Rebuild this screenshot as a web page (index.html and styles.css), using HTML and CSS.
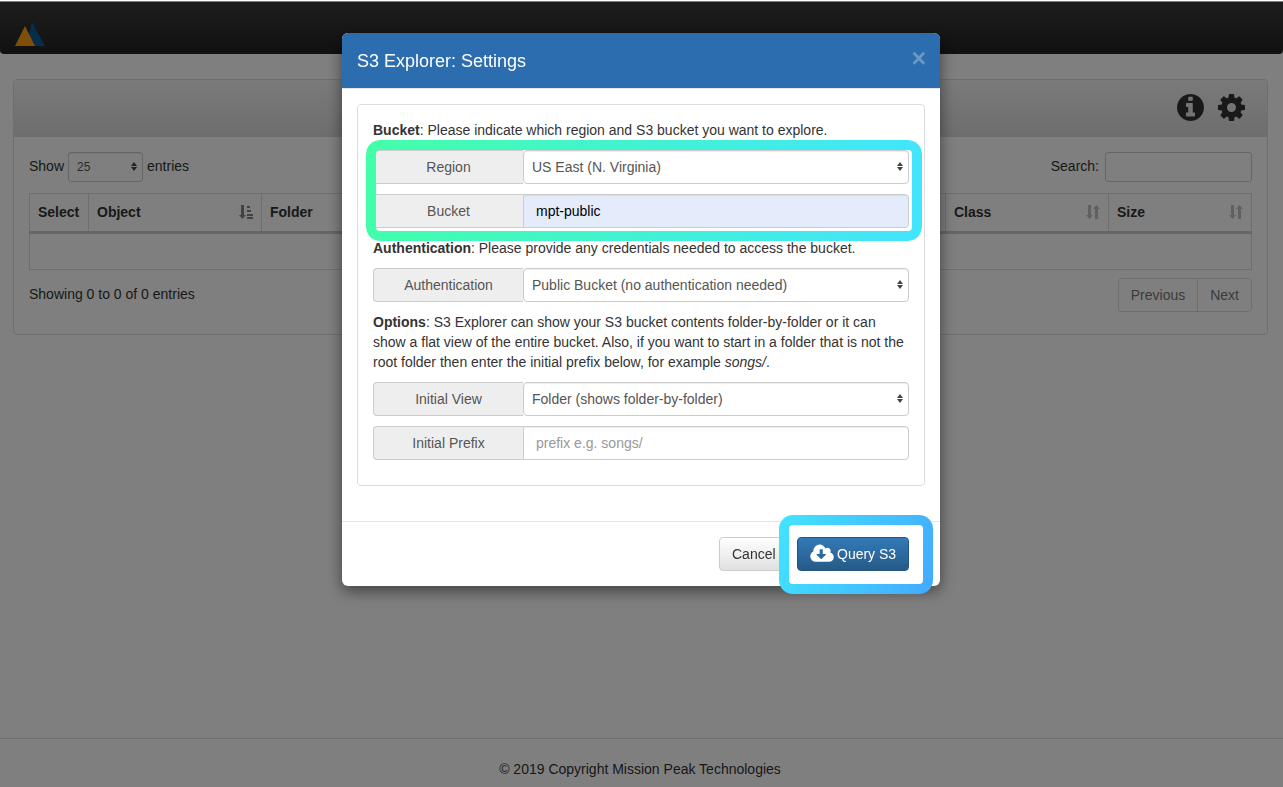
FILE: index.html
```html
<!DOCTYPE html>
<html lang="en">
<head>
  <meta charset="UTF-8" />
  <meta name="viewport" content="width=device-width, initial-scale=1.0"/>
  <title>S3 Explorer</title>
  <link rel="stylesheet" href="styles.css">
</head>
<body>

  <nav class="navbar">
    <svg class="logo" width="32" height="26" viewBox="0 0 32 26">
      <polygon points="19,2 32,26 13,26" fill="#0c5c96"/>
      <polygon points="12,6 22,26 2,26" fill="#ff9f10"/>
    </svg>
  </nav>

  <main class="panel page-panel">
    <div class="panel-heading page-heading">
      <svg class="tool-icon" viewBox="0 128 1536 1536"><path d="M1024 1376v-160q0-14-9-23t-23-9h-96v-512q0-14-9-23t-23-9h-320q-14 0-23 9t-9 23v160q0 14 9 23t23 9h96v320h-96q-14 0-23 9t-9 23v160q0 14 9 23t23 9h448q14 0 23-9t9-23zm-128-896v-160q0-14-9-23t-23-9h-192q-14 0-23 9t-9 23v160q0 14 9 23t23 9h192q14 0 23-9t9-23zm640 416q0 209-103 385.5t-279.5 279.5-385.5 103-385.5-103-279.5-279.5-103-385.5 103-385.5 279.5-279.5 385.5-103 385.5 103 279.5 279.5 103 385.5z"/></svg>
      <svg class="tool-icon" viewBox="128 128 1536 1536"><path d="M1152 896q0-106-75-181t-181-75-181 75-75 181 75 181 181 75 181-75 75-181zm512-109v222q0 12-8 23t-20 13l-185 28q-19 54-39 91 35 50 107 138 10 12 10 25t-9 23q-27 37-99 108t-94 71q-12 0-26-9l-138-108q-44 23-91 38-16 136-29 186-7 28-36 28h-222q-14 0-24.5-8.5t-11.5-21.5l-28-184q-49-16-90-37l-141 107q-10 9-25 9-14 0-25-11-126-114-165-168-7-10-7-23 0-12 8-23 15-21 51-66.5t54-70.5q-27-50-41-99l-183-27q-13-2-21-12.5t-8-23.5v-222q0-12 8-23t19-13l186-28q14-46 39-92-40-57-107-138-10-12-10-24 0-10 9-23 26-36 98.5-107.5t94.5-71.5q13 0 26 10l138 107q44-23 91-38 16-136 29-186 7-28 36-28h222q14 0 24.5 8.5t11.5 21.5l28 184q49 16 90 37l142-107q9-9 24-9 13 0 25 10 129 119 165 170 7 8 7 22 0 12-8 23-15 21-51 66.5t-54 70.5q26 50 41 98l183 28q13 2 21 12.5t8 23.5z"/></svg>
    </div>
    <div class="page-body">
      <div class="table-tools">
        <div class="tool-group">
          <span class="tool-text">Show</span>
          <span class="select-wrap small-select"><select><option>25</option></select></span>
          <span class="tool-text">entries</span>
        </div>
        <div class="tool-group search-group">
          <label class="tool-text" for="search">Search:</label>
          <input class="search-input" id="search" type="text" />
        </div>
      </div>

      <table class="data-table">
        <colgroup>
          <col class="col-select"><col class="col-object"><col><col class="col-class"><col class="col-size">
        </colgroup>
        <thead>
          <tr>
            <th>Select</th>
            <th>
              <span class="th-inner">Object
                <svg class="sort-icon active" width="14" height="14" viewBox="0 0 14 14">
                  <path d="M2 0h3v10h2l-3.500 4L0 10h2z"/>
                  <path d="M8 1h3v2H8zM8 5h4v2H8zM8 9h6v2H8zM8 12h6v2H8z"/>
                </svg>
              </span>
            </th>
            <th>Folder</th>
            <th>
              <span class="th-inner">Class
                <svg class="sort-icon" width="14" height="14" viewBox="0 0 14 14"><path d="M2 0h3v10h2l-3.500 4L0 10h2zM9 14h3V4h2l-3.500-4L7 4h2z"/></svg>
              </span>
            </th>
            <th>
              <span class="th-inner">Size
                <svg class="sort-icon" width="14" height="14" viewBox="0 0 14 14"><path d="M2 0h3v10h2l-3.500 4L0 10h2zM9 14h3V4h2l-3.500-4L7 4h2z"/></svg>
              </span>
            </th>
          </tr>
        </thead>
        <tbody>
          <tr><td colspan="5"></td></tr>
        </tbody>
      </table>

      <div class="table-foot">
        <span class="foot-info">Showing 0 to 0 of 0 entries</span>
        <div class="pagination">
          <a class="page-link">Previous</a>
          <a class="page-link">Next</a>
        </div>
      </div>
    </div>
  </main>

  <footer class="page-footer">© 2019 Copyright Mission Peak Technologies</footer>

  <div class="backdrop"></div>

  <div class="modal">
    <div class="modal-header">
      <h4 class="modal-title">S3 Explorer: Settings</h4>
      <span class="close">×</span>
    </div>
    <div class="modal-body">
      <div class="panel settings">
        <p><b>Bucket</b>: Please indicate which region and S3 bucket you want to explore.</p>
        <div class="input-group">
          <span class="addon">Region</span>
          <span class="select-wrap"><select><option>US East (N. Virginia)</option></select></span>
        </div>
        <div class="input-group">
          <span class="addon">Bucket</span>
          <input class="text-input autofilled" type="text" value="mpt-public" />
        </div>

        <p><b>Authentication</b>: Please provide any credentials needed to access the bucket.</p>
        <div class="input-group">
          <span class="addon">Authentication</span>
          <span class="select-wrap"><select><option>Public Bucket (no authentication needed)</option></select></span>
        </div>

        <p><b>Options</b>: S3 Explorer can show your S3 bucket contents folder-by-folder or it can show a flat view of the entire bucket. Also, if you want to start in a folder that is not the root folder then enter the initial prefix below, for example <i>songs/</i>.</p>
        <div class="input-group">
          <span class="addon">Initial View</span>
          <span class="select-wrap"><select><option>Folder (shows folder-by-folder)</option></select></span>
        </div>
        <div class="input-group">
          <span class="addon">Initial Prefix</span>
          <input class="text-input" type="text" placeholder="prefix e.g. songs/" />
        </div>

        <div class="green-frame"></div>
      </div>
    </div>
    <div class="modal-footer">
      <button class="btn btn-default" type="button">Cancel</button>
      <div class="blue-frame">
        <button class="btn btn-primary" type="button">
          <svg class="cloud" width="24" height="22" viewBox="0 0 1920 1792"><path d="M1280 928q0-14-9-23t-23-9h-224v-352q0-13-9.500-22.500t-22.500-9.500h-192q-13 0-22.500 9.500t-9.500 22.500v352h-224q-13 0-22.500 9.500t-9.500 22.500q0 14 9 23l352 352q9 9 23 9t23-9l351-351q10-12 10-24zm640 224q0 159-112.500 271.500t-271.500 112.500h-1088q-185 0-316.500-131.500t-131.500-316.500q0-130 70-240t188-165q-2-30-2-43 0-212 150-362t362-150q156 0 285.500 87t188.500 231q71-62 166-62 106 0 181 75t75 181q0 76-41 138 130 31 213.500 135.500t83.500 238.500z"/></svg>
          Query S3
        </button>
      </div>
    </div>
  </div>

</body>
</html>
```

FILE: styles.css
```css
* {
  box-sizing: border-box;
}

html, body {
  height: 100%;
}

body {
  margin: 0;
  display: flex;
  flex-direction: column;
  overflow: hidden;
  background: #fff;
  color: #333;
  font-family: "Liberation Sans", Arial, sans-serif;
  font-size: 14px;
  line-height: 20px;
}

/* page behind the dialog */

.navbar {
  height: 52px;
  margin-top: 2px;
  flex: none;
  display: flex;
  align-items: flex-end;
  padding: 0 0 8px 13px;
  background: linear-gradient(#3c3c3c, #222);
  border-radius: 0 0 4px 4px;
}

.panel {
  background: #fff;
  border: 1px solid #ddd;
  border-radius: 4px;
}

.page-panel {
  height: 256px;
  flex: none;
  margin: 25px 15px 0 13px;
}

.page-heading {
  height: 57px;
  display: flex;
  justify-content: flex-end;
  align-items: center;
  gap: 14px;
  padding: 0 22px 2px 0;
  background: linear-gradient(#f5f5f5, #dcdcdc);
  border-bottom: 1px solid #ddd;
  border-radius: 3px 3px 0 0;
}

.tool-icon {
  width: 27px;
  height: 27px;
  fill: #333;
}

.page-body {
  padding: 15px;
}

.table-tools {
  display: flex;
  justify-content: space-between;
  margin-bottom: 11px;
}

.tool-group {
  display: flex;
  align-items: center;
  gap: 4px;
  height: 30px;
}

.tool-text {
  margin-bottom: 2px;
}

.search-group {
  gap: 6px;
}

.search-input {
  width: 147px;
  height: 30px;
  border: 1px solid #ccc;
  border-radius: 3px;
}

.data-table {
  width: 100%;
  table-layout: fixed;
  border-collapse: collapse;
  border: 1px solid #ddd;
}

.col-select { width: 59px; }
.col-object { width: 173px; }
.col-class { width: 163px; }
.col-size { width: 143px; }

.data-table th {
  height: 39px;
  padding: 0 8px 2px;
  text-align: left;
  border: 1px solid #ddd;
  border-bottom: 3px solid #ccc;
}

.data-table td {
  height: 37px;
}

.th-inner {
  display: flex;
  justify-content: space-between;
  align-items: center;
}

.sort-icon {
  fill: #333;
  opacity: 0.3;
}

.sort-icon.active {
  opacity: 0.6;
}

.table-foot {
  display: flex;
  justify-content: space-between;
  align-items: flex-start;
  margin-top: 8px;
}

.foot-info {
  padding-top: 6px;
}

.pagination {
  display: flex;
  height: 34px;
  border: 1px solid #ddd;
  border-radius: 4px;
}

.page-link {
  padding: 6px 12px;
  color: #777;
}

.page-link + .page-link {
  border-left: 1px solid #ddd;
}

.page-footer {
  height: 49px;
  margin-top: auto;
  flex: none;
  padding: 20px 3px 0 0;
  text-align: center;
  border-top: 1px solid #ddd;
}

/* dialog */

.backdrop {
  position: fixed;
  inset: 1px 0 0;
  background: rgba(0, 0, 0, 0.5);
}

.modal {
  position: fixed;
  top: 33px;
  left: 342px;
  width: 598px;
  background: #fff;
  border-radius: 6px;
  box-shadow: 0 5px 15px rgba(0, 0, 0, 0.5);
}

.modal-header {
  display: flex;
  justify-content: space-between;
  align-items: center;
  height: 56px;
  padding: 0 15px;
  background: #2b6dae;
  color: #fff;
  border-bottom: 1px solid #e5e5e5;
  border-radius: 6px 6px 0 0;
}

.modal-title {
  margin: 0;
  font-size: 18px;
  font-weight: 500;
}

.close {
  font-size: 25px;
  font-weight: bold;
  color: rgba(255, 255, 255, 0.3);
  margin: -6px -1px 0 0;
}

.modal-body {
  padding: 15px 15px 35px;
}

.settings {
  position: relative;
  padding: 15px 15px 15px;
}

.settings p {
  margin: 0 0 10px;
}

.input-group {
  display: flex;
  height: 34px;
  margin-bottom: 10px;
}

.addon {
  width: 150px;
  flex: none;
  display: flex;
  align-items: center;
  justify-content: center;
  color: #555;
  background: #eee;
  border: 1px solid #ccc;
  border-right: none;
  border-radius: 4px 0 0 4px;
}

.select-wrap {
  position: relative;
  display: block;
  flex: 1;
}

.select-wrap select {
  width: 100%;
  height: 100%;
  padding: 0 20px 0 8px;
  appearance: none;
  background: #fff;
  color: #555;
  border: 1px solid #ccc;
  border-radius: 4px;
  box-shadow: inset 0 1px 1px rgba(0, 0, 0, 0.075);
  font: inherit;
}

/* the little up and down arrows of a mac select */
.select-wrap::before,
.select-wrap::after {
  content: "";
  position: absolute;
  right: 6px;
  border-left: 3px solid transparent;
  border-right: 3px solid transparent;
}

.select-wrap::before {
  top: calc(50% - 5px);
  border-bottom: 4px solid #444;
}

.select-wrap::after {
  top: 50%;
  border-top: 4px solid #444;
}

.small-select {
  width: 75px;
  height: 30px;
  flex: none;
}

.small-select select {
  font-size: 12px;
  padding-left: 8px;
  border-radius: 3px;
}

.text-input {
  flex: 1;
  min-width: 0;
  padding: 0 12px;
  color: #555;
  border: 1px solid #ccc;
  border-radius: 0 4px 4px 0;
  box-shadow: inset 0 1px 1px rgba(0, 0, 0, 0.075);
  font: inherit;
}

.text-input::placeholder {
  color: #999;
}

.autofilled {
  background: #e4ecfc;
  color: #000;
}

.green-frame {
  position: absolute;
  top: 35px;
  left: 8px;
  width: 556px;
  height: 101px;
  padding: 10px;
  border-radius: 14px;
  background: linear-gradient(100deg, #42ffa8, #42e4ff);
  mask: linear-gradient(#fff 0 0) content-box, linear-gradient(#fff 0 0);
  mask-composite: exclude;
}

.modal-footer {
  display: flex;
  justify-content: flex-end;
  align-items: center;
  height: 65px;
  padding: 15px;
  border-top: 1px solid #e5e5e5;
}

.btn {
  height: 34px;
  padding: 0 12px;
  border-radius: 4px;
  font: inherit;
  white-space: nowrap;
}

.btn-default {
  width: 68px;
  color: #333;
  background: linear-gradient(#fff, #e0e0e0);
  border: 1px solid #ccc;
}

.btn-primary {
  display: flex;
  align-items: center;
  gap: 3px;
  width: 112px;
  color: #fff;
  background: linear-gradient(#337ab7, #265a88);
  border: 1px solid #245580;
}

.cloud {
  fill: #fff;
  flex: none;
}

.blue-frame {
  position: relative;
  width: 154px;
  height: 79px;
  flex: none;
  margin: -22px -8px -23px -8px;
  padding: 12px 14px 13px 8px;
  border: 10px solid transparent;
  border-radius: 14px;
  background: linear-gradient(#fff, #fff) padding-box,
    linear-gradient(110deg, #42e4ff, #42aaff) border-box;
}
```
